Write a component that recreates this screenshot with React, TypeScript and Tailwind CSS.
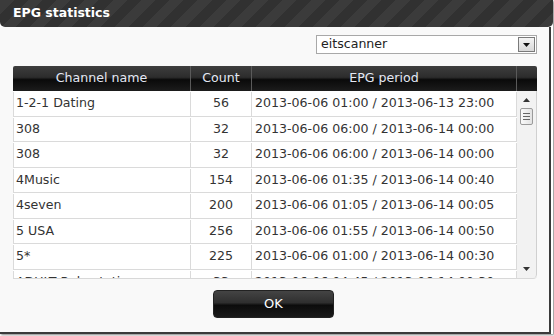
import React from "react";

const rows: [string, string, string][] = [
  ["1-2-1 Dating", "56", "2013-06-06 01:00 / 2013-06-13 23:00"],
  ["308", "32", "2013-06-06 06:00 / 2013-06-14 00:00"],
  ["308", "32", "2013-06-06 06:00 / 2013-06-14 00:00"],
  ["4Music", "154", "2013-06-06 01:35 / 2013-06-14 00:40"],
  ["4seven", "200", "2013-06-06 01:05 / 2013-06-14 00:05"],
  ["5 USA", "256", "2013-06-06 01:55 / 2013-06-14 00:50"],
  ["5*", "225", "2013-06-06 01:00 / 2013-06-14 00:30"],
  ["ADULT Babestation", "33", "2013-06-06 04:45 / 2013-06-14 00:30"],
];

export default function App() {
  return (
    <div
      className="w-[554px] h-[336px] bg-white overflow-hidden text-[#333]"
      style={{ fontFamily: '"DejaVu Sans", Verdana, sans-serif' }}
    >
      <div className="w-[553px] h-[334px] flex flex-col shadow-[1px_1px_2px_rgba(0,0,0,0.5)]">
        {/* title bar */}
        <div className="h-[27px] shrink-0 rounded-b-[5px] flex items-center pl-[13px] bg-[repeating-linear-gradient(135deg,#3b3b3b_0px,#3b3b3b_10px,#313131_10px,#313131_20px)]">
          <span className="text-white font-bold text-[12.5px] leading-none">EPG statistics</span>
        </div>
        {/* body */}
        <div className="flex-1 bg-[#f9f9f9] border-r-[2px] border-b-[2px] border-[#3a3a3a] flex flex-col w-[551px]">
          {/* select */}
          <div className="flex justify-end pt-[8px] pr-[12px]">
            <div className="w-[221px] h-[19px] bg-white border border-[#a8a8a8] flex items-center">
              <span className="flex-1 pl-[4px] text-[12.6px] text-[#222] leading-none">eitscanner</span>
              <div className="w-[17px] h-[15px] mr-[1px] border border-[#7a7a7a] bg-[linear-gradient(#f4f4f4,#d8d8d8)] flex items-center justify-center">
                <svg width="7" height="4" viewBox="0 0 7 4">
                  <path d="M0 0h7L3.5 4z" fill="#111" />
                </svg>
              </div>
            </div>
          </div>
          {/* table */}
          <div className="ml-[13px] mt-[12px] w-[524px] flex flex-col">
            <div className="h-[25px] flex rounded-t-[2px] bg-[linear-gradient(#3e3e3e_0%,#2c2c2c_45%,#0a0a0a_55%,#1c1c1c_100%)] text-[#e4e8f4] text-[12.6px]">
              <div className="w-[178px] flex items-center justify-center border-r border-[#5a5a5a]">Channel name</div>
              <div className="w-[61px] flex items-center justify-center border-r border-[#5a5a5a]">Count</div>
              <div className="w-[265px] flex items-center justify-center border-r border-[#5a5a5a]">EPG period</div>
              <div className="flex-1" />
            </div>
            <div className="h-[188px] flex bg-white rounded-br-[4px] border-b border-[#d8d8d8] overflow-hidden">
              <div className="w-[504px] flex flex-col overflow-hidden">
                {rows.map((r, i) => (
                  <div key={i} className="h-[25.5px] shrink-0 flex border-b border-[#dadada] text-[12.6px] pt-[1px]">
                    <div className="w-[178px] pl-[2px] flex items-center border-r border-[#dadada] border-l">{r[0]}</div>
                    <div className="w-[61px] flex items-center justify-center border-r border-[#dadada]">{r[1]}</div>
                    <div className="w-[265px] pl-[3px] flex items-center border-r border-[#dadada]">{r[2]}</div>
                  </div>
                ))}
              </div>
              <div className="flex-1 bg-[#f2f2f2] border-r border-[#d0d0d0] rounded-br-[4px] flex flex-col items-center">
                <svg width="7" height="4" viewBox="0 0 7 4" className="mt-[7px]">
                  <path d="M3.5 0L7 4H0z" fill="#333" />
                </svg>
                <div className="mt-[6px] w-[13px] h-[17px] bg-[linear-gradient(90deg,#fafafa,#e2e2e2)] border border-[#9a9a9a] rounded-[2px] flex flex-col items-center justify-center gap-[2px]">
                  <div className="w-[7px] h-px bg-[#666]" />
                  <div className="w-[7px] h-px bg-[#666]" />
                  <div className="w-[7px] h-px bg-[#666]" />
                </div>
                <div className="flex-1" />
                <svg width="7" height="4" viewBox="0 0 7 4" className="mb-[7px]">
                  <path d="M0 0h7L3.5 4z" fill="#333" />
                </svg>
              </div>
            </div>
          </div>
          {/* button */}
          <div className="flex justify-center mt-[11px] pr-[2px]">
            <div className="w-[121px] h-[28px] rounded-[4px] bg-[linear-gradient(#444_0%,#2f2f2f_45%,#0c0c0c_55%,#1a1a1a_100%)] border border-[#222] flex items-center justify-center text-white text-[13px]">
              OK
            </div>
          </div>
        </div>
      </div>
    </div>
  );
}
